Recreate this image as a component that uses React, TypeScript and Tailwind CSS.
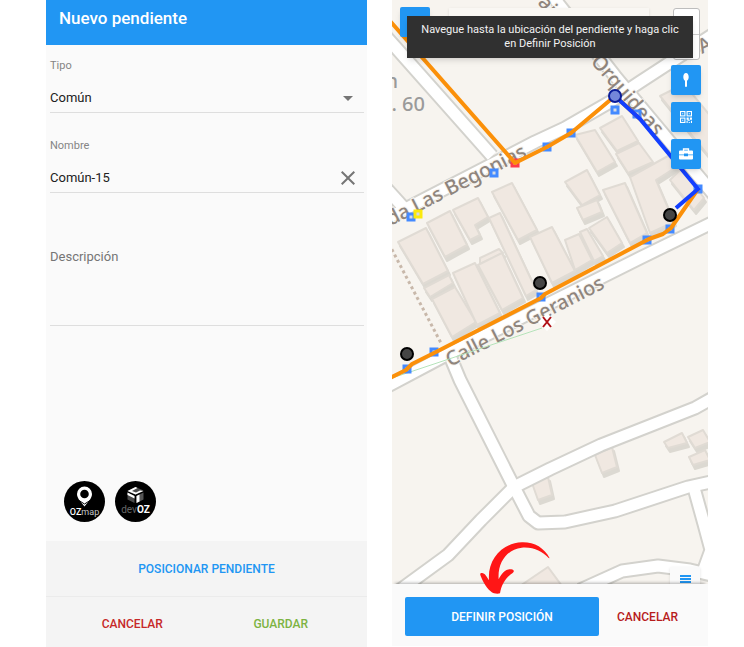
import { useState } from "react";
import { MdArrowDropDown, MdClose } from "react-icons/md";

const roads = [
  "M380 30 L398 50 L469 130 L492 156",
  "M384 186 L404 208",
  "M380 222 L485 168 L535 142 L565 128 L610 102 L640 82 L720 30",
  "M545 -15 L560 6 L615 76 L650 118 L720 202",
  "M380 390 L450 353 L540 308 L640 258 L720 219",
  "M450 356 L460 380 L514 487 L529 516 L538 523 L565 522 L615 511 L688 487 L720 480",
  "M514 487 L481 520 L448 555 L400 590",
  "M514 487 L550 469 L601 445 L695 408 L720 394",
  "M694 488 L704 524 L711 550 L703 572",
  "M580 590 L622 571 L658 566 L690 570 L720 577",
];

const buildings = [
  "398,242 426,228 448,271 423,284",
  "424,288 449,275 453,283 430,297",
  "432,299 455,287 476,322 452,337",
  "427,223 450,211 467,245 445,257",
  "453,210 478,198 488,217 475,225 480,235 470,240",
  "492,192 512,183 537,230 518,240",
  "489,218 500,213 536,290 526,296",
  "480,258 499,249 503,253 480,264",
  "453,273 475,263 500,313 477,325",
  "478,265 502,253 523,298 502,310",
  "530,237 552,227 575,271 552,283",
  "575,135 595,130 615,162 597,172",
  "600,128 622,116 638,141 617,151",
  "616,154 639,143 653,162 628,173",
  "630,177 668,156 678,166 656,180 674,222 650,233",
  "670,180 682,168 704,198 694,210",
  "565,182 587,170 600,195 582,205",
  "577,208 597,200 602,212 583,220",
  "603,190 625,183 647,233 630,243",
  "589,228 607,217 622,243 607,253",
  "565,240 579,234 592,260 575,270",
  "580,232 587,229 603,256 594,261",
  "660,96 684,84 712,118 712,160",
  "532,483 548,477 552,495 538,500",
  "595,455 612,447 617,467 602,473",
  "664,442 682,433 687,443 668,448",
  "688,437 703,430 710,442 695,448",
  "689,457 705,450 710,460 693,465",
  "520,586 548,567 562,586",
];

const boxes = [
  [547, 147],
  [571, 133],
  [637, 114],
  [494, 173],
  [411, 217],
  [698, 189],
  [670, 229],
  [647, 240],
  [541, 297],
  [434, 352],
  [407, 369],
];

const poles = [
  [670, 215],
  [540, 283],
  [407, 354],
];

function StreetMap() {
  return (
    <svg
      className="absolute inset-0 h-full w-full"
      viewBox="392 0 316 584"
      preserveAspectRatio="xMidYMin slice"
      aria-hidden="true"
    >
      <rect x="392" width="316" height="584" fill="#f7f4ef" />

      <g fill="#dcd9d2" stroke="#dcd9d2" strokeWidth="2" strokeLinejoin="round" transform="translate(2 4)">
        {buildings.map((points) => (
          <polygon key={points} points={points} />
        ))}
      </g>
      <g fill="#f0e8e1" stroke="#e0dbd4" strokeWidth="2" strokeLinejoin="round">
        {buildings.map((points) => (
          <polygon key={points} points={points} />
        ))}
      </g>

      <g fill="none" stroke="#d3d2cd" strokeWidth="15" strokeLinejoin="round">
        {roads.map((d) => (
          <path key={d} d={d} />
        ))}
      </g>
      <g fill="none" stroke="#ffffff" strokeWidth="11" strokeLinejoin="round">
        {roads.map((d) => (
          <path key={d} d={d} />
        ))}
      </g>
      <path d="M389 244 L442 345" stroke="#c8b8aa" strokeWidth="3" strokeDasharray="3 3" />

      <g
        fill="#8f857d"
        stroke="#f7f4ef"
        strokeWidth="2"
        paintOrder="stroke"
        fontSize="20"
        fontWeight="500"
        className="font-['Noto_Sans']"
      >
        <text transform="translate(528 156) rotate(-27)" textAnchor="end">
          da Las Begonias
        </text>
        <text transform="translate(450 367) rotate(-27)">Calle Los Geranios</text>
        <text transform="translate(590 62) rotate(49)">Orquideas</text>
        <text transform="translate(537 3) rotate(49)">aje</text>
        <text transform="translate(702 54) rotate(-27)">A</text>
        <text x="398" y="88" textAnchor="end" fill="#9a9a9a">
          n
        </text>
        <text x="425" y="111" textAnchor="end" fill="#9a9a9a">
          . 60
        </text>
      </g>

      <path d="M392 378 L542 328" stroke="#b5e3ba" strokeWidth="1" />

      <g fill="#d5dbe4" stroke="#448aff" strokeWidth="3">
        {boxes.map(([x, y]) => (
          <rect key={`${x}-${y}`} x={x - 3} y={y - 3} width="6" height="6" />
        ))}
        <rect x="612" y="107" width="6" height="6" />
        <rect x="415" y="211" width="6" height="6" stroke="#fbe90d" />
        <rect x="512" y="160" width="6" height="6" stroke="#ff3b4a" />
      </g>

      <g fill="none" stroke="#fb9009" strokeWidth="4" strokeLinejoin="round">
        <path d="M390 21 L515 163 L547 147 L571 133 L615 96 L640 119" />
        <path d="M698 189 L671 228 L663 234 L649 239 L545 294 L541 298 L434 353 L412 364 L406 370 L390 378" />
      </g>
      <path d="M617 98 L640 119 L698 189 L676 208" fill="none" stroke="#133fff" strokeWidth="4" />

      <circle cx="615" cy="96" r="6" fill="#7487da" stroke="#0b1d9b" strokeWidth="2" />
      <g fill="#454545" stroke="#000000" strokeWidth="2">
        {poles.map(([x, y]) => (
          <circle key={x} cx={x} cy={y} r="6" />
        ))}
      </g>

      <path d="M547 313 L556 322 L547 331 L538 322 Z" fill="#ffffff" />
      <path d="M543 317 L551 327 M551 317 L543 327" stroke="#b01218" strokeWidth="2" />
    </svg>
  );
}

function OzMapLogo() {
  return (
    <svg width="41" height="41" viewBox="0 0 41 41" role="img" aria-label="OZmap">
      <circle cx="20.5" cy="20.5" r="20.5" fill="#000000" />
      <path
        fillRule="evenodd"
        d="M20.5 5.5a7.5 7.5 0 0 0-7.5 7.5c0 4.500 4.500 8.500 7.500 12.500 3-4 7.500-8 7.500-12.500a7.500 7.500 0 0 0-7.500-7.500zm0 3.200a4.300 4.300 0 1 1 0 8.600 4.300 4.300 0 0 1 0-8.600z"
        fill="#ffffff"
      />
      <path d="M15 19.500 L20.500 23 L26 19.500" fill="none" stroke="#000000" strokeWidth="1" />
      <text x="20.500" y="34" textAnchor="middle" fontSize="9" fill="#ffffff" className="font-[Roboto]">
        <tspan fontWeight="500">OZ</tspan>
        <tspan fill="#c4c4c4">map</tspan>
      </text>
    </svg>
  );
}

function DevOzLogo() {
  return (
    <svg width="41" height="41" viewBox="0 0 41 41" role="img" aria-label="devOZ">
      <circle cx="20.5" cy="20.5" r="20.5" fill="#000000" />
      <path d="M12.500 10 L20.500 6 L28.500 9.500 L20.500 13.500 Z" fill="#4b4b4b" />
      <path d="M12.500 10 L20.500 6 L22.500 7 L17 10 L21 11.500 L25 9.500 L28.500 10 L20.500 13.500 Z" fill="#ffffff" />
      <path d="M12.500 11.500 L19.500 15 V22 L12.500 18.500 Z" fill="#4b4b4b" />
      <path d="M12.500 11.500 L19.500 15 V17.500 L12.500 14 Z" fill="#ffffff" />
      <path d="M21.500 15 L28.500 11.500 V18.500 L21.500 22 Z" fill="#555555" />
      <path d="M21.500 15 L24.500 13.500 V20.500 L21.500 22 Z" fill="#ffffff" />
      <text x="20.500" y="32" textAnchor="middle" fontSize="10" fill="#ffffff" className="font-[Roboto]">
        <tspan fill="#666666">dev</tspan>
        <tspan fontWeight="700">OZ</tspan>
      </text>
    </svg>
  );
}

function PoleIcon() {
  return (
    <svg width="16" height="16" viewBox="0 0 16 16" fill="#ffffff" aria-hidden="true">
      <path d="M8 1c1.800 0 2.700 2 2.700 4S9.800 8.300 9 8.800V14a1 1 0 0 1-2 0V8.800C6.200 8.300 5.300 7 5.300 5S6.200 1 8 1z" />
    </svg>
  );
}

function QrIcon() {
  return (
    <svg width="12" height="12" viewBox="0 0 11 11" aria-hidden="true">
      <g fill="none" stroke="#ffffff" strokeWidth="1">
        <rect x="0.500" y="0.500" width="4" height="4" />
        <rect x="6.500" y="0.500" width="4" height="4" />
        <rect x="0.500" y="6.500" width="4" height="4" />
      </g>
      <path
        d="M2 2h1v1H2z M8 2h1v1H8z M2 8h1v1H2z M6 6h2v2H6z M9 6h2v2H9z M7 8h2v1H7z M6 9h1v2H6z M8 10h1v1H8z M10 9h1v2h-1z"
        fill="#ffffff"
      />
    </svg>
  );
}

function BriefcaseIcon() {
  return (
    <svg width="14" height="12" viewBox="0 0 14 12" aria-hidden="true">
      <path d="M4.500 3V1h5v2" fill="none" stroke="#ffffff" strokeWidth="1.300" />
      <path
        d="M1 2.500h12a1 1 0 0 1 1 1V6.500H9V5.500H5V6.500H0V3.500a1 1 0 0 1 1-1z M0 7.300h5v1h4v-1h5v3.200a1 1 0 0 1-1 1H1a1 1 0 0 1-1-1z"
        fill="#ffffff"
      />
    </svg>
  );
}

const mapButton = "flex h-[30px] w-[30px] items-center justify-center rounded-[2px] bg-[#2196f3] shadow-md";

function PendingForm() {
  const [type, setType] = useState("comun");
  const [name, setName] = useState("Común-15");

  return (
    <form className="flex flex-col bg-[#fafafa]" onSubmit={(e) => e.preventDefault()}>
      <header className="h-[45px] bg-[#2196f3] px-[13px] pt-1.5">
        <h1 className="text-[17px] leading-6 font-medium text-white">Nuevo pendiente</h1>
      </header>

      <div className="flex flex-1 flex-col pr-[3px] pl-1">
        <div className="pt-[13px]">
          <label htmlFor="tipo" className="block text-[11px] leading-4 text-[#858585]">
            Tipo
          </label>
          <div className="mt-2 flex h-[31px] items-center border-b border-[#dedede] pt-px pr-1">
            <select
              id="tipo"
              value={type}
              onChange={(e) => setType(e.target.value)}
              className="min-w-0 flex-1 appearance-none bg-transparent text-[13px] text-[#212121] outline-none"
            >
              <option value="comun">Común</option>
            </select>
            <MdArrowDropDown size={24} color="#757575" />
          </div>
        </div>

        <div className="pt-[25px]">
          <label htmlFor="nombre" className="block text-[11px] leading-4 text-[#858585]">
            Nombre
          </label>
          <div className="mt-2 flex h-[31px] items-center border-b border-[#dedede] pt-px pr-1">
            <input
              id="nombre"
              value={name}
              onChange={(e) => setName(e.target.value)}
              className="min-w-0 flex-1 bg-transparent text-[13px] text-[#212121] outline-none"
            />
            <button type="button" aria-label="Borrar nombre" onClick={() => setName("")}>
              <MdClose size={24} color="#757575" />
            </button>
          </div>
        </div>

        <textarea
          aria-label="Descripción"
          placeholder="Descripción"
          className="mt-14 block h-[77px] resize-none border-b border-[#dedede] bg-transparent text-[13px] leading-4 text-[#212121] outline-none placeholder:text-[#757575]"
        />

        <div className="mt-auto flex gap-2.5 pb-[19px] pl-3.5">
          <OzMapLogo />
          <DevOzLogo />
        </div>
      </div>

      <footer className="bg-[#f4f4f4] text-[12px] font-medium">
        <button type="button" className="block h-14 w-full border-b border-[#ebebeb] pt-px text-[#2196f3]">
          POSICIONAR PENDIENTE
        </button>
        <div className="flex h-[50px] items-center justify-around px-3">
          <button type="button" className="flex-1 pt-1 text-[#c62828]">
            CANCELAR
          </button>
          <button type="submit" className="flex-1 pt-1 text-[#7cb342]">
            GUARDAR
          </button>
        </div>
      </footer>
    </form>
  );
}

function MapScreen() {
  return (
    <section className="mb-px flex flex-col bg-[#fafafa]">
      <div className="relative min-h-96 flex-1 overflow-hidden">
        <StreetMap />

        <button aria-label="Menú" className="absolute top-[7px] left-2 h-[30px] w-[30px] rounded-[2px] bg-[#2196f3] shadow-md" />
        <div className="absolute top-2 right-[59px] left-[57px] h-7 bg-[#f9f7f3] shadow" />
        <div className="absolute top-2 right-2 flex h-[52px] w-[27px] flex-col divide-y divide-[#cccccc] rounded-[3px] border border-[#bdbdbd] bg-white">
          <button aria-label="Acercar" className="flex-1" />
          <button aria-label="Alejar" className="flex-1" />
        </div>

        <div className="absolute top-[65px] right-[7px] flex flex-col gap-[7px]">
          <button aria-label="Poste" className={mapButton}>
            <PoleIcon />
          </button>
          <button aria-label="Código QR" className={mapButton}>
            <QrIcon />
          </button>
          <button aria-label="Herramientas" className={mapButton}>
            <BriefcaseIcon />
          </button>
        </div>

        <p className="absolute inset-x-[15px] top-4 bg-[#303030] px-1 py-[7px] text-center text-[11px] leading-[14px] text-[#f2f2f2] shadow-md">
          Navegue hasta la ubicación del pendiente y haga clic <br />
          en Definir Posición
        </p>

        <button aria-label="Capas" className="absolute right-2 bottom-0 flex h-[17px] w-[30px] justify-center bg-[#fafafa] pt-2 shadow-sm">
          <svg width="11" height="9" viewBox="0 0 11 9" aria-hidden="true">
            <path d="M0 1h11 M0 4h11 M0 7h11" stroke="#2196f3" strokeWidth="2" />
          </svg>
        </button>
      </div>

      <footer className="relative flex items-center pt-[13px] pr-3 pb-2.5 pl-[13px] text-[12px] font-medium shadow-[0_-4px_3px_-3px_rgba(0,0,0,0.3)]">
        <div className="relative w-[194px]">
          <button className="h-[39px] w-full rounded-[2px] bg-[#2196f3] text-white">DEFINIR POSICIÓN</button>
          <svg
            className="absolute -top-[55px] left-[75px]"
            width="70"
            height="52"
            viewBox="285 66 210 156"
            aria-hidden="true"
          >
            <path
              d="M494 115 C478 83 447 66 411 67 C352 69 307 118 312 181 C304 168 300 160 291 159 C285 159 284 163 288 170 C299 197 312 213 327 220 C334 222 341 222 345 220 C349 195 361 174 383 159 C389 154 387 150 379 148 C362 146 350 160 341 178 C337 128 366 88 410 83 C446 80 471 94 491 114 Z"
              fill="#ff1616"
            />
          </svg>
        </div>
        <button className="flex-1 text-[#b71c1c]">CANCELAR</button>
      </footer>
    </section>
  );
}

export default function App() {
  return (
    <main className="grid min-h-screen grid-cols-[321fr_316fr] gap-[25px] bg-white pr-9 pl-[46px] font-[Roboto,sans-serif]">
      <PendingForm />
      <MapScreen />
    </main>
  );
}
